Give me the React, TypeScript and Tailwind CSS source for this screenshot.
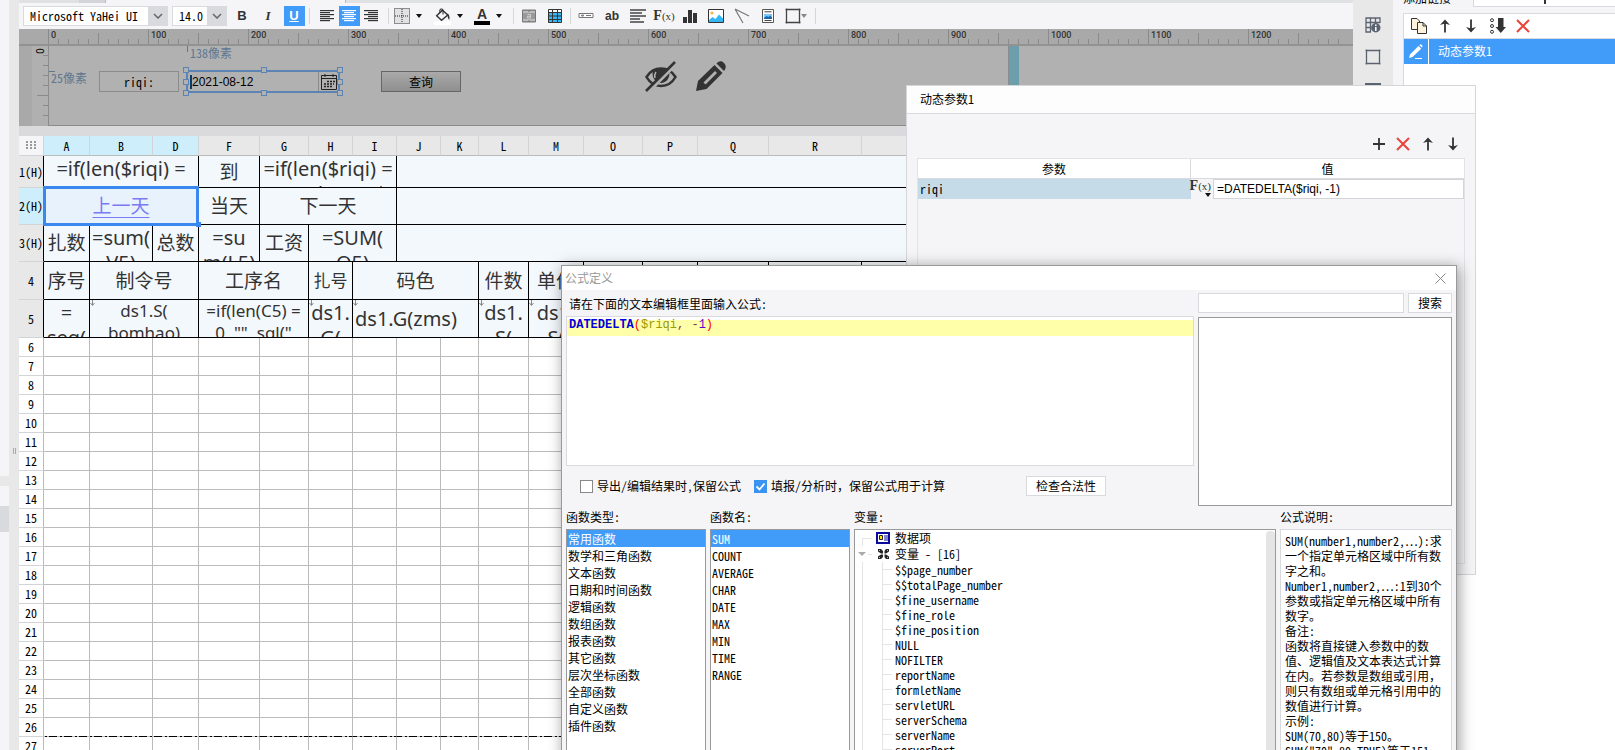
import { ReactNode, useState } from "react";
import clsx from "clsx";

const fonts = ["Microsoft YaHei UI", "SimSun", "Arial"];
const sizes = ["14.0", "12.0", "16.0"];

const columns = [
  { name: "A", width: "w-[46px]", active: true },
  { name: "B", width: "w-[63px]", active: true },
  { name: "D", width: "w-[46px]", active: true },
  { name: "F", width: "w-[61px]" },
  { name: "G", width: "w-[49px]" },
  { name: "H", width: "w-[44px]" },
  { name: "I", width: "w-[44px]" },
  { name: "J", width: "w-[44px]" },
  { name: "K", width: "w-[38px]" },
  { name: "L", width: "w-[50px]" },
  { name: "M", width: "w-[55px]" },
  { name: "O", width: "w-[59px]" },
  { name: "P", width: "w-[55px]" },
  { name: "Q", width: "w-[71px]" },
  { name: "R", width: "w-[93px]" },
  { name: "", width: "w-auto" },
];

const categories = [
  "常用函数",
  "数学和三角函数",
  "文本函数",
  "日期和时间函数",
  "逻辑函数",
  "数组函数",
  "报表函数",
  "其它函数",
  "层次坐标函数",
  "全部函数",
  "自定义函数",
  "插件函数",
];

const functionNames = ["SUM", "COUNT", "AVERAGE", "CHAR", "DATE", "MAX", "MIN", "TIME", "RANGE"];

const variables = [
  "$$page_number",
  "$$totalPage_number",
  "$fine_username",
  "$fine_role",
  "$fine_position",
  "NULL",
  "NOFILTER",
  "reportName",
  "formletName",
  "servletURL",
  "serverSchema",
  "serverName",
  "serverPort",
];

const description = [
  "SUM(number1,number2,…):求",
  "一个指定单元格区域中所有数",
  "字之和。",
  "Number1,number2,…:1到30个",
  "参数或指定单元格区域中所有",
  "数字。",
  "备注:",
  "函数将直接键入参数中的数",
  "值、逻辑值及文本表达式计算",
  "在内。若参数是数组或引用，",
  "则只有数组或单元格引用中的",
  "数值进行计算。",
  "示例:",
  "SUM(70,80)等于150。",
  'SUM("70",80,TRUE)等于151',
];

/* ---------- icons ---------- */

const Icon = ({ children, size = 16 }: { children: ReactNode; size?: number }) => (
  <svg width={size} height={size} viewBox="0 0 16 16" fill="none" stroke="#333" className="shrink-0">
    {children}
  </svg>
);

const Caret = ({ color = "#111" }: { color?: string }) => (
  <svg width="6" height="4" viewBox="0 0 6 4" className="shrink-0">
    <path d="M0 0h6L3 4z" fill={color} />
  </svg>
);

const Chevron = () => (
  <svg width="10" height="6" viewBox="0 0 10 6" fill="none" stroke="#666" strokeWidth="1.5">
    <path d="M1 1l4 4 4-4" />
  </svg>
);

const Lines = ({ mode }: { mode: "left" | "center" | "right" }) => {
  const rows = [14, 10, 14, 10, 14, 10];
  return (
    <svg width="14" height="12" viewBox="0 0 14 12" fill={mode === "center" ? "#fff" : "#333"}>
      {rows.map((w, i) => (
        <rect
          key={i}
          x={mode === "left" ? 0 : mode === "right" ? 14 - w : (14 - w) / 2}
          y={i * 2}
          width={w}
          height="1.2"
        />
      ))}
    </svg>
  );
};

const BorderIcon = () => (
  <Icon>
    <rect x="1" y="1" width="14" height="14" fill="#e2e2e4" stroke="none" />
    <path d="M.5 .5h15v15H.5zM8 1v14M1 8h14" stroke="#222" strokeDasharray="1 1" />
  </Icon>
);

const BucketIcon = () => (
  <Icon size={17}>
    <rect x="0" y="12.5" width="16" height="3.5" fill="#fff" stroke="none" />
    <path d="M8 2L2.5 7.2l4.6 4.3L13 6.6z" stroke="#333" strokeWidth="1.3" />
    <path d="M5.5 4.5V2a1.6 1.6 0 013 0v4" stroke="#333" />
    <path d="M11.5 5.5c2.500 0 3.400 1.500 3 5.500-1.300-.8-1.700-2.500-1.700-4z" fill="#333" stroke="none" />
  </Icon>
);

const MergeIcon = () => (
  <Icon>
    <path d="M1.500 2h13v12h-13z" fill="#999" stroke="#777" />
    <path d="M2 4h12M2 12h12" stroke="#ddd" />
    <path d="M8 2v2M8 12v2" stroke="#777" />
    <path d="M6.500 6.500h3v3.500h-3v-1.700h3" stroke="#ccc" />
  </Icon>
);

const GridIcon = () => (
  <Icon>
    <path d="M1.500 2h13v12.500h-13z" fill="#35b6f5" stroke="none" />
    <rect x="1.500" y="1.500" width="13" height="3" fill="#fff" stroke="none" />
    <path d="M1.500 1.500h13v13h-13zM1.500 4.500h13M1.500 8h13M1.500 11.500h13M5.500 2v12M10.500 2v12" stroke="#333" />
  </Icon>
);

const FieldIcon = () => (
  <Icon>
    <path d="M1 5.500h14v4H1z" fill="#fff" stroke="#777" />
    <path d="M3.500 7h2v1h-2zM8 7.500h5" stroke="#777" />
  </Icon>
);

const TextIcon = () => (
  <Icon>
    <path d="M0 2h16M0 5h12M0 8h16M0 11h10M0 14h14" stroke="#444" strokeWidth="1.400" />
  </Icon>
);

const FxLabel = () => (
  <span className="font-['Liberation_Serif',serif] text-[14px] leading-none font-bold whitespace-nowrap text-[#333]">
    F<span className="text-[11px] font-normal">(x)</span>
  </span>
);

const ChartIcon = () => (
  <Icon>
    <path d="M1 9h4v6H1zM6 2h4v13H6zM11 5h4v10h-4z" fill="#333" stroke="none" />
  </Icon>
);

const ImageIcon = () => (
  <Icon>
    <path d="M.5 1.500h15v13H.5z" fill="#fff" />
    <circle cx="4" cy="5" r="1.600" fill="#f6b545" stroke="none" />
    <path d="M1 12l3.500-3 3 2L11 6.500l4 4V14H1z" fill="#35b6f5" stroke="none" />
  </Icon>
);

const SlopeIcon = () => (
  <Icon>
    <path d="M1 1l14 7M1 1l8 14" stroke="#777" strokeWidth="1.200" />
  </Icon>
);

const ReportIcon = () => (
  <Icon>
    <path d="M2.500 1.500h11v13h-11z" fill="#fff" stroke="#555" />
    <path d="M4.500 3.800h7M4.500 12.500h7" stroke="#444" />
    <path d="M4 6h8v5H4z" fill="#7cc7f5" stroke="none" />
    <path d="M4 10l2.500-2 2 1 1.500-1.500 2 2V11H4z" fill="#1766b0" stroke="none" />
  </Icon>
);

const FrameIcon = ({ color = "#444" }: { color?: string }) => (
  <Icon>
    <path d="M.5 1.500h15M.5 14.500h15M1.500 .5v15M14.500 .5v15" stroke={color} strokeWidth="1.300" />
  </Icon>
);

const Arrow = ({ down }: { down?: boolean }) => (
  <svg width="14" height="14" viewBox="0 0 14 14" fill="none" stroke="#333" strokeWidth="1.800" className={down ? "rotate-180" : ""}>
    <path d="M7 13.500V2" />
    <path d="M2 6L7 .5 12 6 7 4.500z" fill="#333" stroke="none" />
  </svg>
);

const Cross = () => (
  <svg width="14" height="14" viewBox="0 0 14 14" stroke="#e8443c" strokeWidth="2">
    <path d="M1 1l12 12M13 1L1 13" />
  </svg>
);

const Plus = () => (
  <svg width="12" height="12" viewBox="0 0 12 12" stroke="#333" strokeWidth="1.800">
    <path d="M6 0v12M0 6h12" />
  </svg>
);

const CopyIcon = () => (
  <Icon>
    <path d="M.5 .5h5.500l2.500 2.500v8.500h-8z" fill="#fdf3dc" />
    <path d="M6.500 4.500h5.500l3.500 3.500v7.500h-9z" fill="#fdf3dc" />
    <path d="M12 4.500V8h3.500" />
  </Icon>
);

const SortIcon = () => (
  <Icon>
    <circle cx="2" cy="2.200" r="1.500" />
    <circle cx="2" cy="8" r="1.500" />
    <circle cx="2" cy="13.800" r="1.500" />
    <path d="M8 0h5.500v9H16l-5.200 6L5.500 9H8z" fill="#333" stroke="none" />
  </Icon>
);

const PenIcon = () => (
  <Icon>
    <path d="M1 14l1-3.500 8.500-8.500 2.700 2.700L4.500 13z" fill="#fff" stroke="none" />
    <path d="M11.300 1.200l1-.8c.8-.4 2.600 1.400 2.200 2.300l-.7.9z" fill="#fff" stroke="none" />
    <path d="M7 14.500h7" stroke="#fff" />
  </Icon>
);

const SheetInfoIcon = () => (
  <Icon>
    <path d="M15 6V1H1v14h5M1 5.500h14M1 10.500h5M5.500 1v14M10.500 1v5" stroke="#5c6370" strokeWidth="1.300" />
    <circle cx="10.800" cy="10.800" r="4.700" fill="#5c6370" stroke="none" />
    <path d="M10.800 10v4M10.800 7.500v1.500" stroke="#fff" strokeWidth="1.500" />
  </Icon>
);

const HiddenEyeIcon = () => (
  <svg width="32" height="31" viewBox="0 0 32 31" fill="none">
    <path d="M1.500 16C6 8.500 11 7.500 16 7.500s10 1 14.500 8.500c-4 7-9 9-14.500 9S5.500 23 1.500 16z" stroke="#333" strokeWidth="2.500" />
    <path d="M8 9.500C12 6.500 20 6.500 24 9.500c2 7-3 12.500-8 12.500S6 17 8 9.500z" fill="#333" />
    <path d="M11 11c-1.500 2-1.500 4-1 6" stroke="#b1b1b1" strokeWidth="1.500" />
    <path d="M3 31.500L32 2.500" stroke="#b1b1b1" strokeWidth="3" />
    <path d="M1 30L30 1" stroke="#333" strokeWidth="2.500" />
  </svg>
);

const PencilIcon = () => (
  <svg width="31" height="31" viewBox="0 0 31 31">
    <path d="M0 30l2-10L18.500 4l8 8L10.500 28z" fill="#333" />
    <path d="M7.500 21.500L19 10l2 2L9.500 23.500z" fill="#b1b1b1" />
    <path d="M20.500 2.500C23 0 25.500-.5 28 2s2 5.500 0 8z" fill="#333" />
  </svg>
);

const CalendarIcon = () => (
  <Icon>
    <path d="M.5 1.500h15v14H.5zM.5 4.500h15M4 0v3M12 0v3" stroke="#222" />
    <path d="M6 7.500h8M3 10h10M3 12.500h8" stroke="#222" strokeWidth="1.500" strokeDasharray="2 1" />
  </Icon>
);

/* ---------- top toolbar ---------- */

const Separator = () => <span className="mx-0.5 h-4 w-px shrink-0 bg-[#d5d6d9]" />;

const ToolButton = ({ label, active, narrow, children }: { label: string; active?: boolean; narrow?: boolean; children: ReactNode }) => (
  <button aria-label={label} className={clsx("flex h-5 shrink-0 items-center justify-center", narrow ? "w-[22px]" : "w-[26px]")}>
    <span className={clsx("flex h-5 w-[21px] items-center justify-center", active && "bg-[#419bf9] text-white")}>
      {children}
    </span>
  </button>
);

const MenuButton = ({ label, children }: { label: string; children: ReactNode }) => (
  <button aria-label={label} className="flex h-5 w-10 shrink-0 items-center gap-1.5 pl-[3px]">
    {children}
    <Caret />
  </button>
);

const Picker = ({ label, options, className }: { label: string; options: string[]; className: string }) => (
  <div className={clsx("relative h-5 shrink-0", className)}>
    <select aria-label={label} className="h-5 w-full appearance-none border border-[#d8dadd] bg-white pl-1.5 leading-4 text-black">
      {options.map((o) => (
        <option key={o}>{o}</option>
      ))}
    </select>
    <span className="pointer-events-none absolute inset-y-0 right-0 flex w-5 items-center justify-center bg-[#d8dadd]">
      <Chevron />
    </span>
  </div>
);

const Toolbar = () => (
  <div className="flex h-[26px] items-center bg-[#f5f5f7] pl-1">
    <Picker label="字体" options={fonts} className="w-[145px]" />
    <Picker label="字号" options={sizes} className="ml-1 w-[55px]" />
    <div className="ml-0.5 flex font-['Liberation_Sans',sans-serif] text-[13px] text-[#333]">
      <ToolButton label="加粗">
        <b>B</b>
      </ToolButton>
      <ToolButton label="倾斜">
        <i className="font-['Liberation_Serif',serif] font-bold">I</i>
      </ToolButton>
      <ToolButton label="下划线" active>
        <b className="underline">U</b>
      </ToolButton>
    </div>
    <Separator />
    <div className="flex px-1">
      <ToolButton narrow label="左对齐">
        <Lines mode="left" />
      </ToolButton>
      <ToolButton narrow active label="居中">
        <Lines mode="center" />
      </ToolButton>
      <ToolButton narrow label="右对齐">
        <Lines mode="right" />
      </ToolButton>
    </div>
    <Separator />
    <MenuButton label="边框">
      <BorderIcon />
    </MenuButton>
    <MenuButton label="背景色">
      <BucketIcon />
    </MenuButton>
    <MenuButton label="字体颜色">
      <span className="w-4 border-b-4 border-black text-center font-['Liberation_Sans',sans-serif] text-[14px] leading-[13px] font-bold text-[#333]">
        A
      </span>
    </MenuButton>
    <Separator />
    <ToolButton label="合并单元格">
      <MergeIcon />
    </ToolButton>
    <ToolButton label="表格">
      <GridIcon />
    </ToolButton>
    <Separator />
    <ToolButton label="控件">
      <FieldIcon />
    </ToolButton>
    <ToolButton label="文本">
      <b className="font-['Liberation_Sans',sans-serif] text-[12px] text-[#333]">ab</b>
    </ToolButton>
    <ToolButton label="富文本">
      <TextIcon />
    </ToolButton>
    <ToolButton label="公式">
      <FxLabel />
    </ToolButton>
    <ToolButton label="图表">
      <ChartIcon />
    </ToolButton>
    <ToolButton label="图片">
      <ImageIcon />
    </ToolButton>
    <ToolButton label="斜线">
      <SlopeIcon />
    </ToolButton>
    <ToolButton label="子报表">
      <ReportIcon />
    </ToolButton>
    <button aria-label="悬浮元素" className="ml-1 flex h-5 items-center pr-1.5">
      <FrameIcon />
      <Caret color="#888" />
    </button>
    <Separator />
  </div>
);

/* ---------- parameter pane ---------- */

const Ruler = () => (
  <div className="flex h-[17px] overflow-hidden border-b-2 border-[#929292] bg-[#a9a9a9] pl-[29px]">
    {Array.from({ length: 13 }, (_, i) => (
      <div key={i} className="relative h-full w-[100px] shrink-0 border-l border-[#8b8b8b] pl-0.5 font-[Roboto,sans-serif] text-[9px] leading-[13px] font-medium text-[#333]">
        {i * 100}
        <svg className="absolute bottom-0 left-0" width="100" height="12" viewBox="0 0 100 12" stroke="#8b8b8b">
          <path d="M9.500 7v5M19.500 7v5M29.500 7v5M39.500 7v5M49.500 1v11M59.500 7v5M69.500 7v5M79.500 7v5M89.500 7v5" />
        </svg>
      </div>
    ))}
  </div>
);

const handles = [
  "-top-[5px] -left-[5px]",
  "-top-[5px] left-[73px]",
  "-top-[5px] -right-[5px]",
  "top-[7px] -left-[5px]",
  "top-[7px] -right-[5px]",
  "-bottom-[5px] -left-[5px]",
  "-bottom-[5px] left-[73px]",
  "-bottom-[5px] -right-[5px]",
];

const ParameterPane = () => (
  <div className="bg-[#dadadc] pb-2.5">
    <Ruler />
    <div className="flex h-20 bg-[#a9a9a9] pl-[13px]">
      <div className="relative w-[17px] border-r border-[#8b8b8b] bg-[#b0b0b0]">
        <span className="absolute top-0 left-1 rotate-90 font-[Roboto,sans-serif] text-[10px] leading-[10px]">0</span>
        <svg className="absolute top-0 right-0" width="12" height="80" viewBox="0 0 12 80" stroke="#8b8b8b">
          <path d="M7 9.500h5M7 19.500h5M7 29.500h5M7 39.500h5M1 49.500h11M7 59.500h5M7 69.500h5" />
        </svg>
      </div>
      {/* free design canvas: widgets keep the position the user gave them */}
      <div className="relative w-[960px] border-r border-b border-[#8b8b8b] bg-[#b1b1b1]">
        <span className="absolute top-0 left-[138px] h-1.5 border-l border-[#5f7890]" />
        <span className="absolute top-0 left-[141px] leading-[13px] text-[#5f7890]">138像素</span>
        <span className="absolute top-[25px] left-0 w-1.5 border-t border-[#5f7890]" />
        <span className="absolute top-[25px] left-0.5 leading-[13px] text-[#5f7890]">25像素</span>
        <label htmlFor="riqi" className="absolute top-[25px] left-[50px] flex h-[21px] w-20 items-center justify-center border border-[#8b8b8b] text-black">
          riqi:
        </label>
        <div className="absolute top-6 left-[137px] flex h-[23px] w-[154px] items-center border-2 border-[#5b84b5]">
          <span className="ml-0.5 h-3.5 w-0.5 bg-[#0b3b6b]" />
          <input id="riqi" defaultValue="2021-08-12" className="min-w-0 flex-1 bg-transparent font-['Liberation_Sans',sans-serif] text-[12px] leading-4 text-black" />
          <button aria-label="日历" className="flex h-[19px] w-5 items-center justify-center border-l border-[#8b8b8b]">
            <CalendarIcon />
          </button>
          {handles.map((pos) => (
            <span key={pos} className={clsx("absolute size-1.5 border border-[#5b84b5] bg-[#b1b1b1]", pos)} />
          ))}
        </div>
        <button className="absolute top-[25px] left-[332px] h-[21px] w-20 border border-[#666] bg-linear-to-b from-[#aaa] to-[#8f8f8f] text-black">
          查询
        </button>
        <span className="absolute top-[15px] left-[596px]">
          <HiddenEyeIcon />
        </span>
        <span className="absolute top-[15px] left-[647px]">
          <PencilIcon />
        </span>
      </div>
      <div className="w-2.5 bg-[#6d9eab]" />
      <div className="flex-1 bg-[#b1b1b1]" />
    </div>
  </div>
);

/* ---------- spreadsheet ---------- */

const plain = "text-[19px] leading-[26px]";
const formula = "text-[20px] leading-[25px]";
const small = "text-[17px] leading-[22px]";

type CellProps = {
  span?: number;
  height: string;
  text?: string[];
  className?: string;
  size?: string;
  top?: boolean;
  marker?: boolean;
  selected?: boolean;
};

const Cell = ({ span = 1, height, text = [], className, size = plain, top, marker, selected }: CellProps) => (
  <td colSpan={span} className="relative border-r border-b border-black p-0">
    <div
      className={clsx(
        "flex flex-col overflow-hidden text-center font-['Noto_Sans','Noto_Sans_CJK_SC',sans-serif] whitespace-nowrap",
        height,
        size,
        top ? "justify-start" : "justify-center",
        selected ? "bg-[#e8f2fc] text-[#7a7af5] underline underline-offset-4" : "bg-[#f3f8fc] text-[#333]",
        className
      )}
    >
      {text.map((line) => (
        <span key={line} className="flex shrink-0 justify-center">
          {line}
        </span>
      ))}
    </div>
    {marker && (
      <svg className="absolute top-0 left-0" width="5" height="6" viewBox="0 0 5 6" fill="none" stroke="#888">
        <path d="M2.500 0v5M.5 3l2 2.500 2-2.500" />
      </svg>
    )}
    {selected && (
      <>
        <span className="absolute -inset-x-px -top-0.5 -bottom-0.5 z-10 border-[3px] border-[#3a87f0]" />
        <span className="absolute -right-[3px] -bottom-[3px] z-10 size-[5px] bg-[#3a87f0]" />
      </>
    )}
  </td>
);

const RowHead = ({ active, report, children }: { active?: boolean; report?: boolean; children: ReactNode }) => (
  <th
    className={clsx(
      "border-r border-b border-b-[#d3d4d8] p-0 text-center font-normal whitespace-nowrap text-black",
      report ? "border-r-black" : "border-r-[#bbb]",
      active ? "bg-[#cdeefa]" : report ? "bg-[#e8e8e8]" : "bg-white"
    )}
  >
    {children}
  </th>
);

const Spreadsheet = () => (
  <table className="w-full table-fixed border-separate border-spacing-0 leading-[14px]">
    <colgroup>
      <col className="w-[25px]" />
      {columns.map((c) => (
        <col key={c.name} className={c.width} />
      ))}
    </colgroup>
    <thead>
      <tr>
        <th className="h-5 border-r border-b border-[#d3d4d8] bg-[#f5f5f7] p-0">
          <svg width="12" height="10" viewBox="0 0 12 10" fill="#999" className="mx-auto">
            <path d="M1 0h2v2H1zM5 0h2v2H5zM9 0h2v2H9zM1 3h2v2H1zM5 3h2v2H5zM9 3h2v2H9zM1 6h2v2H1zM5 6h2v2H5zM9 6h2v2H9z" />
          </svg>
        </th>
        {columns.map((c) => (
          <th
            key={c.name}
            className={clsx(
              "h-5 border-r border-b border-r-[#d3d4d8] border-b-[#bbb] p-0 font-normal text-black",
              c.active ? "bg-[#cdeefa]" : "bg-[#e8e8e8]"
            )}
          >
            {c.name}
          </th>
        ))}
      </tr>
    </thead>
    <tbody>
      <tr>
        <RowHead report>1(H)</RowHead>
        <Cell span={3} height="h-[31px]" top size={formula} text={["=if(len($riqi) =", '0, today(), "$']} />
        <Cell height="h-[31px]" text={["到"]} />
        <Cell span={3} height="h-[31px]" top size={formula} text={["=if(len($riqi) =", '0, today(), "$']} />
        <Cell span={9} height="h-[31px]" />
      </tr>
      <tr>
        <RowHead report active>
          2(H)
        </RowHead>
        <Cell span={3} height="h-9" selected text={["上一天"]} />
        <Cell height="h-9" text={["当天"]} />
        <Cell span={3} height="h-9" text={["下一天"]} />
        <Cell span={9} height="h-9" />
      </tr>
      <tr>
        <RowHead report>3(H)</RowHead>
        <Cell height="h-9" text={["扎数"]} />
        <Cell height="h-9" top size={formula} text={["=sum(", "V5)"]} />
        <Cell height="h-9" text={["总数"]} />
        <Cell height="h-9" top size={formula} text={["=su", "m(L5)"]} />
        <Cell height="h-9" text={["工资"]} />
        <Cell span={2} height="h-9" top size={formula} text={["=SUM(", "Q5)"]} />
        <Cell span={9} height="h-9" />
      </tr>
      <tr>
        <RowHead report>4</RowHead>
        <Cell height="h-[37px]" text={["序号"]} />
        <Cell span={2} height="h-[37px]" text={["制令号"]} />
        <Cell span={2} height="h-[37px]" text={["工序名"]} />
        <Cell height="h-[37px]" size={small} text={["扎号"]} />
        <Cell span={3} height="h-[37px]" text={["码色"]} />
        <Cell height="h-[37px]" text={["件数"]} />
        <Cell height="h-[37px]" text={["单价"]} />
        {[0, 1, 2, 3, 4].map((i) => (
          <Cell key={i} height="h-[37px]" />
        ))}
      </tr>
      <tr>
        <RowHead report>5</RowHead>
        <Cell height="h-[37px]" top size={formula} text={["=", "seq("]} />
        <Cell span={2} height="h-[37px]" top marker size={small} text={["ds1.S(", "bomhao)"]} />
        <Cell span={2} height="h-[37px]" top size={small} text={["=if(len(C5) =", '0, "", sql("']} />
        <Cell height="h-[37px]" top marker size={formula} text={["ds1.", "G("]} />
        <Cell span={3} height="h-[37px]" marker size={formula} className="items-start pl-0.5" text={["ds1.G(zms)"]} />
        <Cell height="h-[37px]" top marker size={formula} text={["ds1.", "S("]} />
        <Cell height="h-[37px]" top marker size={formula} text={["ds1.", "S("]} />
        {[0, 1, 2, 3, 4].map((i) => (
          <Cell key={i} height="h-[37px]" />
        ))}
      </tr>
      {Array.from({ length: 22 }, (_, i) => i + 6).map((n) => (
        <tr
          key={n}
          className={clsx(
            "h-[19px]",
            n === 26 &&
              "bg-[repeating-linear-gradient(90deg,#000_0_8px,#bbb_8px_11px,#000_11px_13px,#bbb_13px_15px)] bg-[length:100%_1px] bg-bottom bg-no-repeat"
          )}
        >
          <RowHead>{n}</RowHead>
          {columns.map((c) => (
            <td key={c.name} className={clsx("border-r border-b border-r-[#bbb] p-0", n === 26 ? "border-b-transparent" : "border-b-[#bbb]")} />
          ))}
        </tr>
      ))}
    </tbody>
  </table>
);

/* ---------- right side ---------- */

const SideStrip = () => (
  <div className="flex w-10 shrink-0 flex-col items-center gap-4 bg-[#e8e8e8] pt-[17px]">
    <SheetInfoIcon />
    <FrameIcon color="#5c6370" />
    <svg width="16" height="16" viewBox="0 0 16 16" fill="none" stroke="#5c6370" strokeWidth="2">
      <path d="M0 3h16v12H0z" />
    </svg>
  </div>
);

const LinkPanel = () => (
  <div className="flex flex-1 flex-col bg-[#f5f5f7] pl-2.5">
    <div className="flex h-[13px] shrink-0 items-start">
      <div className="flex h-1 w-[70px] items-end overflow-hidden leading-none whitespace-nowrap text-black">添加链接</div>
      <div className="flex h-[7px] flex-1 justify-center border-b border-l border-[#d8dadd] bg-white">
        <span className="h-1 w-0.5 bg-[#333]" />
      </div>
    </div>
    <div className="flex-1 border-t border-l border-[#d8dadd] bg-white">
      <div className="flex h-[25px] items-center border-b border-[#d8dadd] pl-[7px]">
        <button aria-label="复制" className="w-[27px]">
          <CopyIcon />
        </button>
        <button aria-label="上移" className="w-[26px]">
          <Arrow />
        </button>
        <button aria-label="下移" className="w-[26px]">
          <Arrow down />
        </button>
        <button aria-label="排序" className="w-[26px]">
          <SortIcon />
        </button>
        <button aria-label="删除">
          <Cross />
        </button>
      </div>
      <div className="flex h-[25px] items-center bg-[#419bf9] text-white">
        <span className="flex h-full w-[25px] items-center justify-center border-r border-white">
          <PenIcon />
        </span>
        <span className="pb-px pl-[9px]">动态参数1</span>
      </div>
    </div>
  </div>
);

/* ---------- dialogs ---------- */

const ParamDialog = () => (
  <section className="absolute top-[85px] right-[139px] left-[906px] flex h-[490px] flex-col border border-[#d5d6d9] bg-[#f5f5f7] text-black">
    <h2 className="flex h-7 shrink-0 items-center border-b border-[#d8dadd] bg-[#fdfdfd] pb-px pl-[13px]">动态参数1</h2>
    <div className="mt-[22px] mr-[15px] flex h-4 items-center justify-end gap-[11px]">
      <button aria-label="增加">
        <Plus />
      </button>
      <button aria-label="删除">
        <Cross />
      </button>
      <button aria-label="上移">
        <Arrow />
      </button>
      <button aria-label="下移">
        <Arrow down />
      </button>
    </div>
    <div className="mx-2.5 mt-1.5 mb-2.5 flex-1 border border-[#e2e3e6]">
      <table className="w-full table-fixed border-separate border-spacing-0">
        <thead>
          <tr className="h-5 bg-white">
            <th className="w-1/2 border-r border-b border-[#d8dadd] p-0 font-normal">参数</th>
            <th className="border-b border-[#d8dadd] p-0 font-normal">值</th>
          </tr>
        </thead>
        <tbody>
          <tr className="h-5">
            <td className="bg-[#c6dbe8] p-0 pl-0.5">riqi</td>
            <td className="p-0">
              <div className="flex">
                <button aria-label="公式" className="flex w-[22px] flex-col items-end pr-0.5">
                  <FxLabel />
                  <Caret />
                </button>
                <input
                  aria-label="值"
                  defaultValue="=DATEDELTA($riqi, -1)"
                  className="h-5 min-w-0 flex-1 border border-[#d3d4d8] bg-white pl-[3px] font-['Liberation_Sans',sans-serif] text-[12px]"
                />
              </div>
            </td>
          </tr>
        </tbody>
      </table>
    </div>
  </section>
);

const ListBox = ({ title, items }: { title: string; items: string[] }) => {
  const [current, setCurrent] = useState(items[0]);
  return (
    <div className="w-[140px] shrink-0">
      <h3 className="h-[23px] leading-[22px]">{title}</h3>
      <ul className="h-[300px] border border-[#999] bg-white">
        {items.map((item) => (
          <li key={item}>
            <button
              onClick={() => setCurrent(item)}
              className={clsx("block h-[17px] w-full pl-px text-left leading-4", item === current && "bg-[#419bf9] text-white")}
            >
              {item}
            </button>
          </li>
        ))}
      </ul>
    </div>
  );
};

const VariableTree = () => (
  <div className="min-w-0 flex-1">
    <h3 className="h-[23px] leading-[22px]">变量:</h3>
    <div className="flex h-[300px] border border-[#999] bg-white">
      <div className="flex-1 pl-[7px]">
        <div className="flex h-4 items-center leading-4">
          <span className="mt-2 h-2 w-2.5 border-t border-l border-[#e5e5e5]" />
          <svg width="14" height="12" viewBox="0 0 14 12" fill="none" className="mr-[5px] ml-1">
            <path d="M1 1h12v10H1z" fill="#fff" stroke="#0a0a9c" strokeWidth="2" />
            <path d="M3.500 3.500h3v4h-3z" fill="#ffe800" stroke="#222" />
            <path d="M8 4h4M8 6h4M8 8h4" stroke="#0a0a9c" />
          </svg>
          数据项
        </div>
        <div className="flex h-4 items-center leading-4">
          <svg width="8" height="4" viewBox="0 0 8 4" className="-ml-1">
            <path d="M0 0h8L4 4z" fill="#aaa" />
          </svg>
          <span className="ml-0.5 w-1 border-t border-[#e5e5e5]" />
          <svg width="11" height="10" viewBox="0 0 11 10" fill="#222" className="mr-1.5 ml-1.5">
            <path d="M0 0h3l2 2v2.500H3L0 2.500zM11 0H8L6.500 2v2.500H8l3-2zM0 10h3l2-2V5.500H3L0 7.500zM11 10H8L6.500 8V5.500H8l3 2z" />
            <path d="M1 1h1v1H1zM9 1h1v1H9zM1 8h1v1H1zM9 8h1v1H9z" fill="#8fd0a0" />
          </svg>
          变量 - [16]
        </div>
        <ul className="border-l border-[#e5e5e5] pl-[19px]">
          {variables.map((v) => (
            <li key={v} className="flex h-[15px] items-center border-l border-[#e5e5e5] leading-[14px]">
              <span className="mr-[3px] w-[9px] border-t border-[#e5e5e5]" />
              {v}
            </li>
          ))}
        </ul>
      </div>
      <div className="mt-px w-[9px] rounded-t bg-[#e5e5e5]" />
    </div>
  </div>
);

const FormulaDialog = () => (
  <section className="absolute top-[265px] right-[158px] left-[561px] border border-[#999] bg-[#f5f5f7] text-black shadow-[2px_2px_14px_rgba(0,0,0,0.4)]">
    <header className="flex h-6 items-center justify-between bg-white pr-2.5 pl-[3px] text-[#999]">
      <h2>公式定义</h2>
      <button aria-label="关闭">
        <svg width="11" height="11" viewBox="0 0 11 11" stroke="#888">
          <path d="M.5 .5l10 10M10.500 .5l-10 10" />
        </svg>
      </button>
    </header>
    <div className="flex gap-1 px-1">
      <div className="min-w-0 flex-1">
        <p className="h-[26px] pl-[3px] leading-[27px]">请在下面的文本编辑框里面输入公式:</p>
        <div role="textbox" aria-label="公式" tabIndex={0} className="h-[150px] border border-[#d8dadd] bg-white pt-[3px]">
          <div className="h-4 bg-[#ffffaa] pl-0.5 font-['Liberation_Mono',monospace] text-[12px] leading-[10px] whitespace-pre">
            <b className="text-[#0000e0]">DATEDELTA</b>
            <span className="text-[#ff0000]">(</span>
            <span className="text-[#999900]">$riqi</span>
            <span className="text-[#804040]">, -</span>
            <span className="text-[#6400c8]">1</span>
            <span className="text-[#ff0000]">)</span>
          </div>
        </div>
        <div className="flex h-9 items-center pt-1 pl-3.5">
          <label className="flex w-[174px] items-center gap-1">
            <input type="checkbox" className="size-[13px] appearance-none border border-[#888] bg-white" />
            导出/编辑结果时,保留公式
          </label>
          <label className="flex items-center gap-1">
            <span className="relative flex size-[13px]">
              <input type="checkbox" defaultChecked className="size-[13px] appearance-none bg-[#3a93f0]" />
              <svg className="pointer-events-none absolute inset-0" width="13" height="13" viewBox="0 0 13 13" fill="none" stroke="#fff" strokeWidth="1.800">
                <path d="M2.500 6.500l3 3 5-6" />
              </svg>
            </span>
            填报/分析时，保留公式用于计算
          </label>
          <button className="mr-[88px] ml-auto h-5 w-20 border border-[#d8dadd] bg-white">检查合法性</button>
        </div>
      </div>
      <div className="w-[254px] shrink-0 pt-[3px]">
        <div className="flex h-5 gap-1">
          <input aria-label="搜索" className="min-w-0 flex-1 border border-[#d8dadd] bg-white px-1" />
          <button className="w-11 border border-[#d8dadd] bg-white">搜索</button>
        </div>
        <div className="mt-1 h-[189px] border border-[#999] bg-white" />
      </div>
    </div>
    <div className="flex gap-1 px-1">
      <ListBox title="函数类型:" items={categories} />
      <ListBox title="函数名:" items={functionNames} />
      <VariableTree />
      <div className="w-[172px] shrink-0">
        <h3 className="h-[23px] leading-[22px]">公式说明:</h3>
        <div className="h-[300px] border border-[#d8dadd] bg-white pt-[3px] pl-1 leading-[15px]">
          {description.map((line) => (
            <p key={line} className="whitespace-nowrap">
              {line}
            </p>
          ))}
        </div>
      </div>
    </div>
  </section>
);

export default function App() {
  return (
    <div className="relative flex h-screen overflow-hidden bg-white font-['Noto_Sans_Mono_CJK_SC','Noto_Sans_CJK_SC',sans-serif] text-[12px] leading-4">
      <aside className="flex w-[9px] shrink-0 flex-col bg-[#f5f5f7]">
        <div className="mt-[476px] h-2.5 bg-[#e8e8e8]" />
        <div className="mt-5 h-[26px] bg-[#d8dadd]" />
      </aside>
      <div className="flex w-2.5 shrink-0 justify-center bg-[#e8e8e8] pt-[448px]">
        <span className="h-1.5 w-[3px] border-x border-[#aaa]" />
      </div>
      <main className="min-w-0 flex-1">
        <div className="flex h-[3px] bg-[#e0e1e3] pl-[60px]">
          <span className="w-[27px] border-r border-[#bbb] bg-[#d3d4d8]" />
          <span className="w-60 border-r border-[#bbb] bg-[#f5f5f7]" />
        </div>
        <Toolbar />
        <ParameterPane />
        <Spreadsheet />
      </main>
      <SideStrip />
      <div className="flex w-[222px] shrink-0">
        <LinkPanel />
      </div>
      <ParamDialog />
      <FormulaDialog />
    </div>
  );
}
